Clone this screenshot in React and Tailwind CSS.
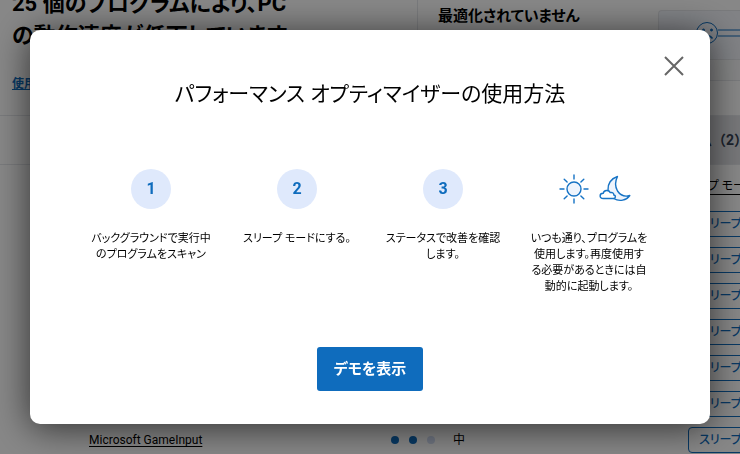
import { useState } from "react";

const steps = [
  { id: 1, lines: ["バックグラウンドで実行中", "のプログラムをスキャン"] },
  { id: 2, lines: ["スリープ モードにする。"] },
  { id: 3, lines: ["ステータスで改善を確認", "します。"] },
  { id: 4, lines: ["いつも通り、プログラムを", "使用します。再度使用す", "る必要があるときには自", "動的に起動します。"] },
];

const programs = ["", "", "", "", "", "", "Microsoft GameInput"];

const SunIcon = () => (
  <svg width="30" height="30" viewBox="0 0 30 30" fill="none" stroke="#1673c5" strokeWidth="1.4" strokeLinecap="round">
    <circle cx="15" cy="15" r="7" fill="#eef4fd" />
    <path d="M15 1v4M15 25v4M1 15h4M25 15h4M5.2 5.2l2.9 2.9M21.9 21.9l2.9 2.9M5.2 24.8l2.9-2.9M21.9 8.1l2.9-2.9" />
  </svg>
);

const MoonIcon = () => (
  <svg width="32" height="30" viewBox="0 0 32 30" fill="none" stroke="#1673c5" strokeWidth="1.4" strokeLinejoin="round">
    <path d="M18.5 2.500C12 4.500 8.500 10 9 16L14.500 24.500C20.500 28 27.500 26.500 30.800 21.500C26.500 22.800 21.500 21.500 18.500 17C16 12.500 16.200 7 18.500 2.500Z" fill="#eef4fd" />
    <path d="M4.200 24.500C0 24.500 .2 19.300 4.200 19.300C4.800 15.800 10 15.600 11.300 18.600C13.600 18 15 19.500 14.800 21C17.200 21.400 16.800 24.500 14.500 24.500Z" fill="#fff" />
  </svg>
);

const SadGauge = () => (
  <svg width="46" height="24" viewBox="0 0 46 24" fill="none" stroke="#0f6cbd">
    <path d="M23 9h23M23 15h23" />
    <circle cx="12" cy="12" r="10.500" />
    <circle cx="8.500" cy="9" r="1" fill="#0f6cbd" />
    <circle cx="16.500" cy="9" r="1" fill="#0f6cbd" />
    <path d="M7.500 17.500c1-4 7-4 10 0" strokeWidth="1.400" />
  </svg>
);

const ProgramsPage = () => (
  <div className="h-screen overflow-hidden bg-white">
    <div className="-mt-3 flex h-[128px] border-b border-gray-200">
      <div className="w-[418px] shrink-0 border-r border-gray-200 pl-3">
        <h1 className="text-[22px] leading-8 font-bold">
          25 個のプログラムにより、PC<br />の動作速度が低下しています
        </h1>
        <a href="#usage" className="mt-[22px] block text-[12px] leading-5 font-bold text-[#0f6cbd] underline">使用方法</a>
      </div>
      <div className="flex flex-1 justify-between pt-4 pl-5">
        <h2 className="text-[15px] leading-6 font-bold">最適化されていません</h2>
        <div className="mt-[6px] w-[82px]">
          <div className="h-[50px] rounded-tl border border-r-0 border-gray-200 bg-[#f3f6fc] pt-[10px] pl-9">
            <SadGauge />
          </div>
          <div className="h-[21px] border-b border-gray-200 bg-gray-50" />
        </div>
      </div>
    </div>
    <div className="flex h-[49px] items-center justify-end border-b border-gray-200">
      <h3 className="flex h-full w-[710px] items-center justify-end bg-[#e1e2e6] text-[14px] font-bold text-gray-700 [font-feature-settings:normal]">
        <span className="-mr-2">スリープ中のプログラム（2）</span>
      </h3>
    </div>
    <table className="w-full table-fixed text-[12px]">
      <thead>
        <tr className="h-[41px]">
          <th className="w-[89px]"></th>
          <th></th>
          <th className="w-[297px]"></th>
          <th className="w-[52px] text-left font-normal whitespace-nowrap">
            <span className="-ml-3 underline underline-offset-4">スリープ モード</span>
          </th>
        </tr>
      </thead>
      <tbody>
        {programs.map((name, i) => (
          <tr key={i} className="h-9">
            <td></td>
            <td className="underline underline-offset-2">{name}</td>
            <td>
              {name && (
                <div className="flex items-center gap-[10px]">
                  <span className="size-2 rounded-full bg-[#0f6cbd]" />
                  <span className="size-2 rounded-full bg-[#0f6cbd]" />
                  <span className="size-2 rounded-full bg-[#d3def5]" />
                  <span className="ml-2">中</span>
                </div>
              )}
            </td>
            <td>
              <button className="h-[26px] w-20 rounded border border-[#0f6cbd] pl-[10px] text-left font-medium text-[#0f6cbd]">スリープ</button>
            </td>
          </tr>
        ))}
      </tbody>
    </table>
  </div>
);

export default function App() {
  const [open, setOpen] = useState(true);

  return (
    <div className="font-[Roboto,'Noto_Sans_CJK_JP',sans-serif] text-black [font-feature-settings:'palt']">
      <ProgramsPage />
      {open && (
        <div className="fixed inset-0 bg-black/47 p-[30px]">
          <div role="dialog" aria-labelledby="dialog-title" className="relative flex flex-col items-center rounded-[10px] bg-white pt-12 pb-[33px] shadow-[0_4px_36px_rgba(0,0,0,0.65)]">
            <button aria-label="閉じる" onClick={() => setOpen(false)} className="absolute top-6 right-6 cursor-pointer">
              <svg width="24" height="24" viewBox="0 0 24 24" fill="none" stroke="#666" strokeWidth="2">
                <path d="M3 3l18 18M21 3L3 21" />
              </svg>
            </button>
            <h2 id="dialog-title" className="text-[21px] leading-8 font-normal">パフォーマンス オプティマイザーの使用方法</h2>
            <div className="mt-[59px] grid w-full grid-cols-4 px-12">
              {steps.map((step) => (
                <div key={step.id} className="flex flex-col items-center text-center">
                  {step.id < 4 ? (
                    <div className="flex size-10 items-center justify-center rounded-full bg-[#dfe9fc] text-[16px] font-bold text-[#0f6cbd]">{step.id}</div>
                  ) : (
                    <div className="flex h-10 items-center gap-[10px] pl-3">
                      <SunIcon />
                      <MoonIcon />
                    </div>
                  )}
                  <p className="mt-[22px] text-[11px] leading-4 whitespace-nowrap">
                    {step.lines.map((line) => (
                      <span key={line} className="block">{line}</span>
                    ))}
                  </p>
                </div>
              ))}
            </div>
            <button className="mt-[52px] h-11 w-[106px] cursor-pointer rounded-[3px] bg-[#0f6cbd] text-[15px] font-bold text-white">デモを表示</button>
          </div>
        </div>
      )}
    </div>
  );
}
